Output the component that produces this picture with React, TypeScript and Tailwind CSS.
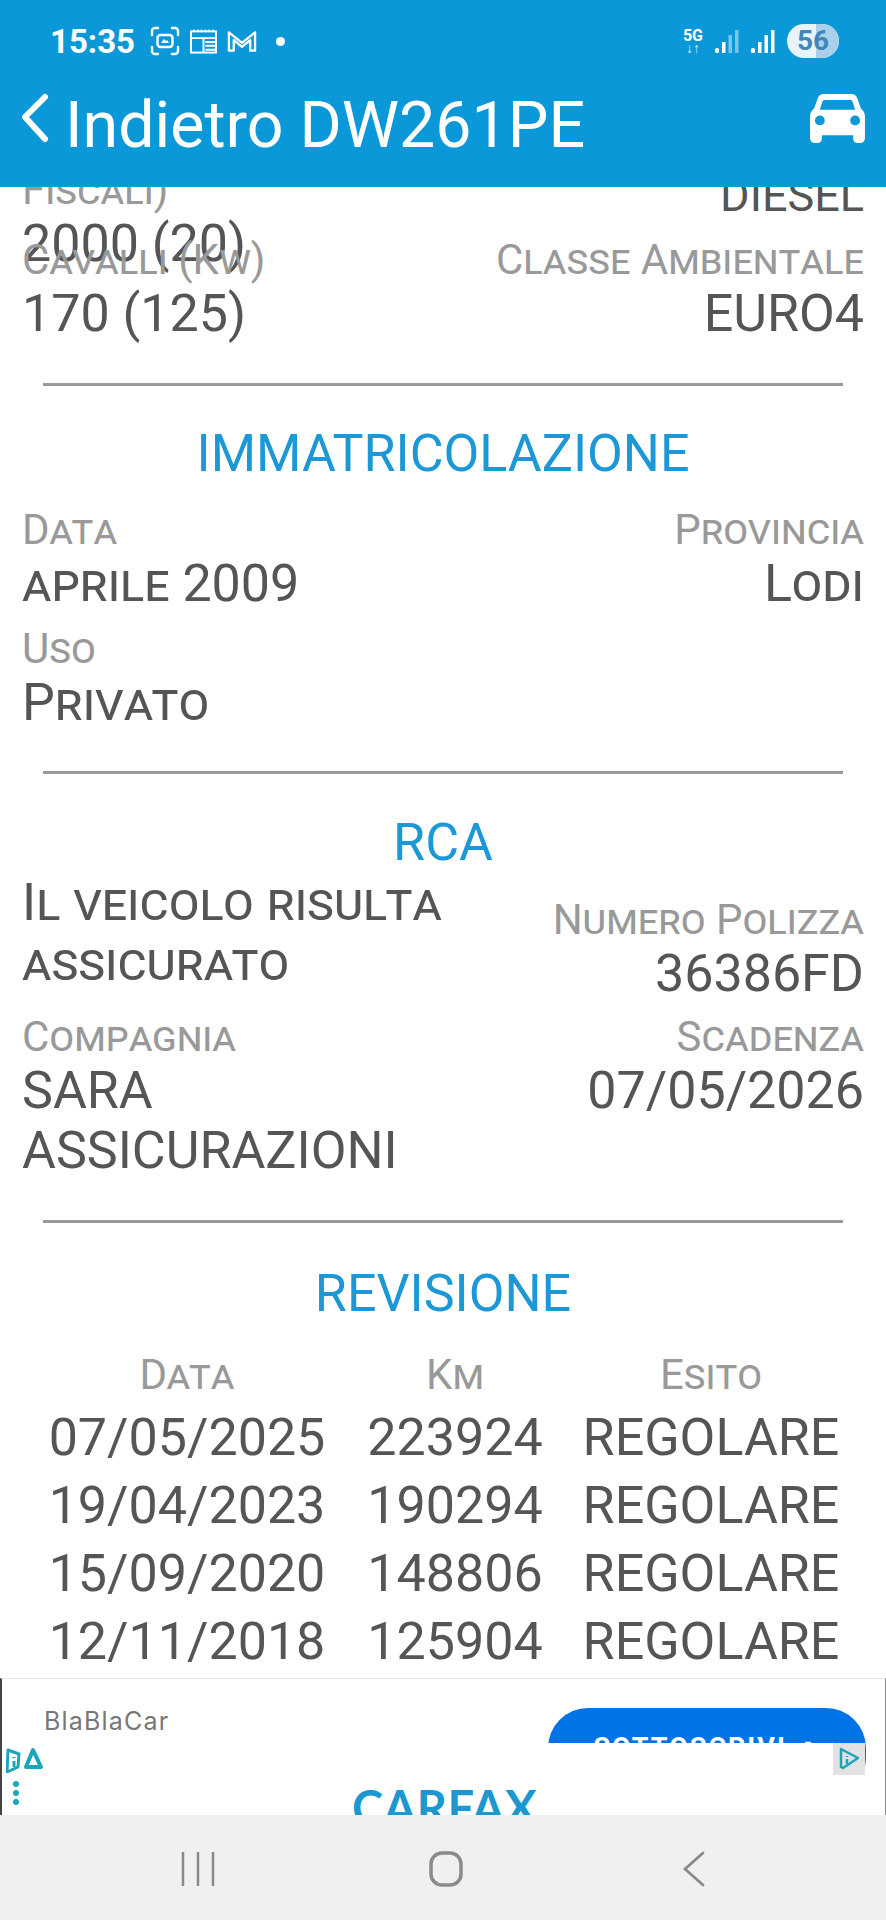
import React from "react";

const font = { fontFamily: "Roboto, 'Noto Sans', sans-serif" };

function Label({ children, right }: { children: React.ReactNode; right?: boolean }) {
  return (
    <div className={`text-[42px] leading-[48px] text-[#999999] [font-variant:small-caps] whitespace-nowrap ${right ? "text-right" : ""}`}>
      {children}
    </div>
  );
}

function Value({ children, right }: { children: React.ReactNode; right?: boolean }) {
  return (
    <div className={`text-[52px] leading-[60px] text-[#555555] [font-variant:small-caps] ${right ? "text-right" : ""}`}>
      {children}
    </div>
  );
}

function Divider() {
  return <div className="mx-[43px] h-[3px] bg-[#999999]" />;
}

function SectionTitle({ children }: { children: React.ReactNode }) {
  return <div className="text-center text-[52px] leading-[60px] text-[#1b98d5]">{children}</div>;
}

const rows = [
  ["07/05/2025", "223924", "REGOLARE"],
  ["19/04/2023", "190294", "REGOLARE"],
  ["15/09/2020", "148806", "REGOLARE"],
  ["12/11/2018", "125904", "REGOLARE"],
];

function StatusIcons() {
  return (
    <div className="flex items-center gap-[10px]">
      <svg width="30" height="30" viewBox="0 0 30 30" fill="none" stroke="white" strokeWidth="2.400" strokeLinecap="round">
        <path d="M2 9V5a3 3 0 0 1 3-3h3M22 2h3a3 3 0 0 1 3 3v4M28 21v4a3 3 0 0 1-3 3h-3M8 28H5a3 3 0 0 1-3-3v-4" />
        <rect x="7.500" y="9" width="15" height="12" rx="3" />
        <path d="M11 17l3-4 2 2 1-1 2 3z" fill="white" stroke="none" />
      </svg>
      <svg width="27" height="26" viewBox="0 0 28 26" fill="none" stroke="white" strokeWidth="2">
        <rect x="1" y="3" width="26" height="22" />
        <path d="M1 10h26M14 10v15M16 14h11M16 18h11M16 22h11" />
        <path d="M4 1v3M8 1v3M12 1v3M16 1v3M20 1v3M24 1v3" strokeWidth="1.400" />
      </svg>
      <svg width="30" height="24" viewBox="0 0 31 24" fill="none" stroke="white" strokeWidth="2.400" strokeLinejoin="round">
        <path d="M2 22V3l13.500 11L29 3v19h-5V11l-8.500 7L7 11v11z" />
      </svg>
      <div className="ml-[9px] w-[9px] h-[9px] rounded-full bg-white" />
    </div>
  );
}

function Signal({ faded }: { faded?: boolean }) {
  const c = faded ? "#7cc4ea" : "white";
  return (
    <svg width="24" height="25" viewBox="0 0 24 25">
      <rect x="0" y="19" width="4" height="5" rx="1.500" fill="white" />
      <rect x="7" y="13" width="3.500" height="11" fill="white" />
      <rect x="13.500" y="6" width="3.500" height="18" fill={c} />
      <rect x="20" y="1" width="3.500" height="23" fill={c} />
    </svg>
  );
}

export default function App() {
  return (
    <div className="w-[886px] h-[1920px] flex flex-col overflow-hidden bg-white" style={font}>
      <header className="h-[187px] shrink-0 bg-[#0b98d9] flex flex-col relative z-10">
        <div className="h-[84px] flex items-center justify-between pl-[50px] pr-[47px]">
          <div className="flex items-center gap-[15px] -mt-[2px]">
            <span className="text-[33px] font-bold text-white leading-none">15:35</span>
            <StatusIcons />
          </div>
          <div className="flex items-center gap-[12px] -mt-[2px]">
            <div className="flex flex-col items-center text-white font-bold leading-none">
              <span className="text-[16px] leading-[15px]">5G</span>
              <span className="text-[14px] leading-[11px] text-[#d8effa]">↓↑</span>
            </div>
            <Signal faded />
            <Signal />
            <div className="relative w-[52px] h-[34px] rounded-full bg-[#e8f3fa] overflow-hidden flex items-center justify-center">
              <div className="absolute right-0 top-0 h-full w-[23px] bg-[#a9d0ea]" />
              <span className="relative text-[28px] font-bold text-[#3f86bb] leading-none">56</span>
            </div>
          </div>
        </div>
        <div className="flex items-start justify-between pl-[21px] pr-[21px]">
          <div className="flex items-start gap-[16px]">
            <svg width="28" height="50" viewBox="0 0 28 50" fill="none" stroke="white" strokeWidth="6" strokeLinecap="round" strokeLinejoin="round" className="mt-[9px]">
              <path d="M24 4L4 24l20 22" />
            </svg>
            <span className="mt-[6px] text-[64.500px] leading-[70px] text-white whitespace-nowrap">Indietro DW261PE</span>
          </div>
          <svg width="55" height="49" viewBox="0 0 56 50" className="mt-[10px]">
            <path
              fillRule="evenodd"
              fill="white"
              d="M14 0h28c3 0 5 1.500 6 4l4 11c3 2 4 5 4 8v22c0 3-2 5-4 5h-4c-3 0-4-2-4-5v-3H12v3c0 3-1 5-4 5H4c-2 0-4-2-4-5V23c0-3 1-6 4-8l4-11c1-2.500 3-4 6-4zM15 6c-1 0-2 .500-2.500 2L10 16h36l-2.500-8c-.500-1.500-1.500-2-2.500-2zM10 22a5 5 0 1 0 0 10 5 5 0 0 0 0-10zM46 22a5 5 0 1 0 0 10 5 5 0 0 0 0-10z"
            />
          </svg>
        </div>
      </header>

      <main className="flex-1 min-h-0 overflow-hidden">
        <div className="-mt-[21px] px-[22px] flex justify-between">
          <div>
            <Label>Fiscali)</Label>
            <Value>2000 (20)</Value>
          </div>
          <div className="text-[45px] leading-[60px] text-right text-[#555555]">DIESEL</div>
        </div>
        <div className="-mt-[38px] px-[22px] flex justify-between relative">
          <div>
            <Label>Cavalli (Kw)</Label>
            <Value>170 (125)</Value>
          </div>
          <div>
            <Label right>Classe Ambientale</Label>
            <Value right>EURO4</Value>
          </div>
        </div>

        <div className="mt-[39px]"><Divider /></div>
        <div className="mt-[38px]"><SectionTitle>IMMATRICOLAZIONE</SectionTitle></div>

        <div className="mt-[22px] px-[22px] flex justify-between">
          <div>
            <Label>Data</Label>
            <Value>aprile 2009</Value>
          </div>
          <div>
            <Label right>Provincia</Label>
            <Value right>Lodi</Value>
          </div>
        </div>
        <div className="mt-[11px] px-[22px]">
          <Label>Uso</Label>
          <Value>Privato</Value>
        </div>

        <div className="mt-[38px]"><Divider /></div>
        <div className="mt-[39px]"><SectionTitle>RCA</SectionTitle></div>

        <div className="px-[22px] flex justify-between">
          <div className="w-[470px] text-[52px] leading-[60px] text-[#555555] [font-variant:small-caps]">
            Il veicolo risulta assicurato
          </div>
          <div className="mt-[23px]">
            <Label right>Numero Polizza</Label>
            <Value right>36386FD</Value>
          </div>
        </div>
        <div className="mt-[9px] px-[22px] flex justify-between">
          <div className="w-[400px]">
            <Label>Compagnia</Label>
            <Value>SARA ASSICURAZIONI</Value>
          </div>
          <div>
            <Label right>Scadenza</Label>
            <Value right>07/05/2026</Value>
          </div>
        </div>

        <div className="mt-[39px]"><Divider /></div>
        <div className="mt-[41px]"><SectionTitle>REVISIONE</SectionTitle></div>

        <div className="mt-[27px] grid grid-cols-[322px_214px_298px] pl-[26px]">
          <Label><div className="text-center">Data</div></Label>
          <Label><div className="text-center">Km</div></Label>
          <Label><div className="text-center">Esito</div></Label>
        </div>
        <div className="mt-[5px] grid grid-cols-[322px_214px_298px] pl-[26px] auto-rows-[68px] items-center">
          {rows.map((r) => (
            <React.Fragment key={r[0]}>
              {r.map((c) => (
                <div key={c} className="text-center text-[52px] leading-[60px] text-[#555555]">{c}</div>
              ))}
            </React.Fragment>
          ))}
        </div>
      </main>

      <aside className="h-[137px] shrink-0 relative overflow-hidden bg-white border-t border-[#e4e4e4] border-l-2 border-l-[#444444] border-r border-r-[#888888]">
        <div className="flex justify-between pl-[42px] pr-[20px] pt-[29px]">
          <span className="text-[25px] leading-[28px] tracking-[1.200px] text-[#777777] font-['Inter',sans-serif] -mt-[1px]">BlaBlaCar</span>
          <div className="w-[318px] h-[90px] -mr-[1px] rounded-[40px] bg-[#0073e6] text-center text-white font-bold text-[27px] leading-[80px] tracking-[2px]">
            SOTTOSCRIVI ➔
          </div>
        </div>
        <div className="absolute left-0 right-[21px] top-[64px] bottom-0 bg-white overflow-hidden">
          <div className="absolute left-[4px] top-[4px]">
            <svg width="38" height="26" viewBox="0 0 38 26" fill="none">
              <path d="M2 3l11 4-1 13-11 5z" stroke="#1ba5bd" strokeWidth="3" strokeLinejoin="round" />
              <path d="M8 10v1M8 14v6" stroke="#1ba5bd" strokeWidth="3" />
              <path d="M27 3l8 17H20z" stroke="#1ba5bd" strokeWidth="4" strokeLinejoin="round" />
            </svg>
            <div className="ml-[7px] mt-[8px] flex flex-col gap-[3px]">
              <div className="w-[6px] h-[6px] rounded-full bg-[#1ba5bd]" />
              <div className="w-[6px] h-[6px] rounded-full bg-[#1ba5bd]" />
              <div className="w-[6px] h-[6px] rounded-full bg-[#1ba5bd]" />
            </div>
          </div>
          <div className="absolute left-[350px] top-[34px] text-[47px] leading-[60px] font-bold tracking-[0.5px] text-[#1b98d0] font-['Lato',sans-serif]">
            CARFAX
          </div>
        </div>
        <div className="absolute right-[20px] top-[64px] w-[32px] h-[32px] bg-[#e2e2e2] flex items-center justify-center">
          <svg width="22" height="24" viewBox="0 0 22 24" fill="none" stroke="#1ba5bd" strokeWidth="2.500" strokeLinejoin="round">
            <path d="M3 2l17 9-15 10-2-1z" />
            <path d="M9 9v1M9 12v5" />
          </svg>
        </div>
      </aside>

      <nav className="h-[105px] shrink-0 bg-[#f0f0f2] flex items-center justify-center">
        <div className="flex items-center ml-[6px] mt-[2px]">
          <div className="w-[248px] flex justify-center">
            <svg width="34" height="34" viewBox="0 0 34 34" stroke="#8a8a8a" strokeWidth="2.500">
              <path d="M2 0v34M17 0v34M32 0v34" />
            </svg>
          </div>
          <div className="w-[248px] flex justify-center">
            <svg width="36" height="36" viewBox="0 0 36 36" fill="none" stroke="#8a8a8a" strokeWidth="3.500">
              <rect x="3" y="2" width="30" height="32" rx="11" />
            </svg>
          </div>
          <div className="w-[248px] flex justify-center">
            <svg width="24" height="36" viewBox="0 0 24 36" fill="none" stroke="#8a8a8a" strokeWidth="2.800" strokeLinecap="round">
              <path d="M21 2L3 18l18 16" />
            </svg>
          </div>
        </div>
      </nav>
    </div>
  );
}
